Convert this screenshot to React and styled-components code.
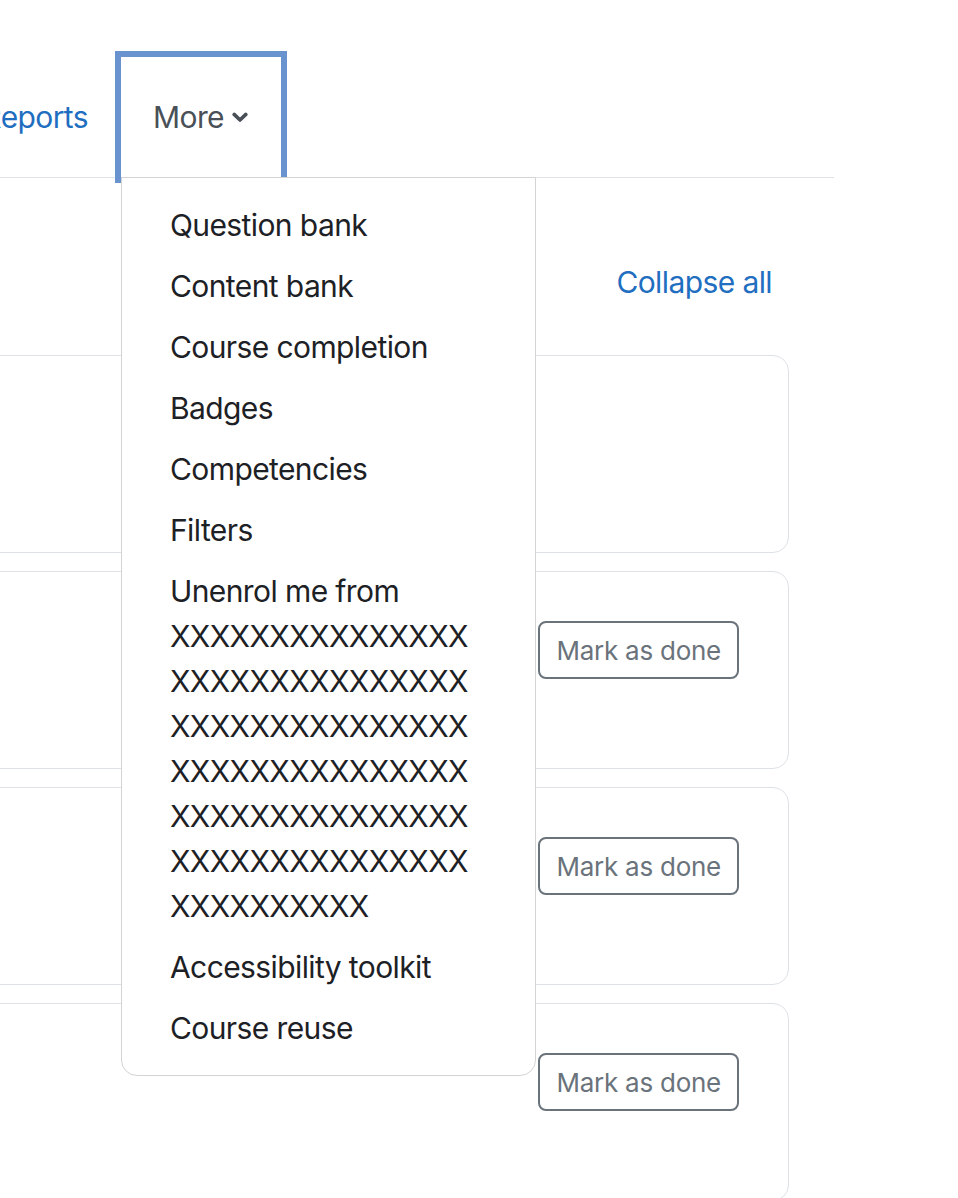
import React from "react"
import styled, { createGlobalStyle } from "styled-components"

const GlobalStyle = createGlobalStyle`
  body {
    margin: 0;
    background: #fff;
    color: #1d2125;
    font-family: Inter, "Liberation Sans", "DejaVu Sans", sans-serif;
    letter-spacing: -0.6px;
    overflow: hidden;
  }
`

const menuItems = [
  "Question bank",
  "Content bank",
  "Course completion",
  "Badges",
  "Competencies",
  "Filters",
  "Unenrol me from " + "X".repeat(100),
  "Accessibility toolkit",
  "Course reuse",
]

const cards = [false, true, true, true]

const ChevronDown = () => (
  <svg width="16" height="11" viewBox="0 0 16 11" aria-hidden="true">
    <path
      d="M2.2 2.4 L8 8 L13.8 2.4"
      fill="none"
      stroke="#495057"
      strokeWidth="3.6"
      strokeLinecap="round"
      strokeLinejoin="round"
    />
  </svg>
)

const App = () => {
  return (
    <Page>
      <GlobalStyle />
      <TabBar>
        <Tab href="#">Reports</Tab>
        <MoreTab>
          <MoreLabel>
            More
            <ChevronDown />
          </MoreLabel>
          <Dropdown>
            {menuItems.map((item) => (
              <DropdownItem key={item} href="#">
                {item}
              </DropdownItem>
            ))}
          </Dropdown>
        </MoreTab>
      </TabBar>
      <Content>
        <SectionHeader>
          <Link href="#">Collapse all</Link>
        </SectionHeader>
        <CardList>
          {cards.map((hasButton, i) => (
            <Card key={i}>{hasButton && <DoneButton>Mark as done</DoneButton>}</Card>
          ))}
        </CardList>
      </Content>
    </Page>
  )
}

export default App

const Page = styled.div`
  width: 958px;
  height: 1198px;
  overflow: hidden;
  padding-top: 57px;
  box-sizing: border-box;
`

const TabBar = styled.nav`
  position: relative;
  z-index: 2;
  display: flex;
  align-items: stretch;
  width: 834px;
  height: 120px;
  border-bottom: 1px solid #dee2e6;
`

const Tab = styled.a`
  display: flex;
  align-items: center;
  justify-content: flex-end;
  box-sizing: border-box;
  width: 200px;
  margin-left: -79px;
  padding-right: 33px;
  font-size: 30px;
  color: #1f6ec0;
  text-decoration: none;
`

const MoreTab = styled.div`
  position: relative;
  display: flex;
  align-items: center;
  width: 160px;
  box-sizing: border-box;
  padding-left: 32px;
  box-shadow: 0 0 0 6px #6893cf;
`

const MoreLabel = styled.span`
  display: flex;
  align-items: center;
  gap: 8px;
  font-size: 30px;
  color: #495057;
  svg {
    margin-top: 1px;
  }
`

const Dropdown = styled.div`
  position: absolute;
  top: 100%;
  left: 0;
  width: 415px;
  box-sizing: border-box;
  padding: 16px 0 17px;
  background: #fff;
  border: 1px solid #d2d4d6;
  border-radius: 0 0 16px 16px;
  display: flex;
  flex-direction: column;
`

const DropdownItem = styled.a`
  display: block;
  padding: 9px 48px 7px;
  font-size: 30px;
  line-height: 45px;
  color: #1d2125;
  text-decoration: none;
  overflow-wrap: anywhere;
`

const Content = styled.div`
  width: 829px;
  margin-left: -40px;
`

const SectionHeader = styled.div`
  display: flex;
  justify-content: flex-end;
  padding: 82px 17px 0 0;
  height: 45px;
  margin-bottom: 50px;
`

const Link = styled.a`
  font-size: 30px;
  line-height: 45px;
  color: #1f6ec0;
  text-decoration: none;
`

const CardList = styled.div`
  display: flex;
  flex-direction: column;
  gap: 18px;
`

const Card = styled.div`
  display: flex;
  justify-content: flex-end;
  align-items: flex-start;
  box-sizing: border-box;
  min-height: 198px;
  padding: 49px 49px 49px 49px;
  border: 1px solid #dee2e6;
  border-radius: 16px;
`

const DoneButton = styled.button`
  box-sizing: border-box;
  height: 58px;
  padding: 0 16px;
  background: #fff;
  border: 2px solid #6a737b;
  border-radius: 8px;
  font-family: inherit;
  font-size: 26px;
  letter-spacing: -0.25px;
  color: #6a737b;
`
